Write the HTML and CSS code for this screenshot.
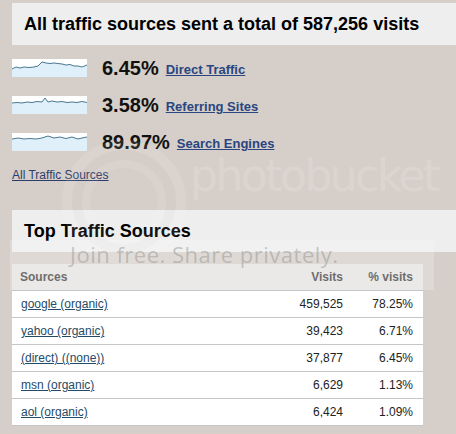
FILE: index.html
```html
<!DOCTYPE html>
<html>

<head>
    <meta name="viewport" content="width=device-width, initial-scale=1.0">
    <title>Traffic Sources</title>
    <link rel="stylesheet" href="styles.css">
</head>

<body>
    <div class="page">
        <header class="box-head">
            <h1>All traffic sources sent a total of 587,256 visits</h1>
        </header>

        <section class="summary">
            <div class="source-row">
                <svg class="spark" width="75" height="18" viewBox="0 0 75 18">
                    <rect width="75" height="18" fill="#ffffff"/>
                    <path d="M0 10 L4 8 L8 9 L12 8 L17 8.5 L22 8 L26 7 L30 3 L34 4 L38 4.5 L42 4 L46 4.5 L50 5 L54 6 L58 5.5 L62 7 L66 7 L70 8 L75 6 L75 18 L0 18 Z" fill="#dff0fa"/>
                    <path d="M0 10 L4 8 L8 9 L12 8 L17 8.5 L22 8 L26 7 L30 3 L34 4 L38 4.5 L42 4 L46 4.5 L50 5 L54 6 L58 5.5 L62 7 L66 7 L70 8 L75 6" fill="none" stroke="#4a7891" stroke-width="1"/>
                </svg>
                <span class="pct">6.45%</span>
                <a href="#" class="src-link">Direct Traffic</a>
            </div>
            <div class="source-row">
                <svg class="spark" width="75" height="18" viewBox="0 0 75 18">
                    <rect width="75" height="18" fill="#ffffff"/>
                    <path d="M0 7 L5 6.5 L10 7 L15 6 L20 6.5 L25 5.5 L30 6 L33 2 L36 6 L40 5 L45 6 L50 5.5 L55 6.5 L60 6 L65 6.5 L70 5.5 L75 6.5 L75 18 L0 18 Z" fill="#dff0fa"/>
                    <path d="M0 7 L5 6.5 L10 7 L15 6 L20 6.5 L25 5.5 L30 6 L33 2 L36 6 L40 5 L45 6 L50 5.5 L55 6.5 L60 6 L65 6.5 L70 5.5 L75 6.5" fill="none" stroke="#4a7891" stroke-width="1"/>
                </svg>
                <span class="pct">3.58%</span>
                <a href="#" class="src-link">Referring Sites</a>
            </div>
            <div class="source-row">
                <svg class="spark" width="75" height="18" viewBox="0 0 75 18">
                    <rect width="75" height="18" fill="#ffffff"/>
                    <path d="M0 6 L6 5 L12 6 L18 5.5 L24 6 L30 5 L36 3 L42 5 L48 4 L54 5.5 L60 4 L66 6 L70 5 L75 4 L75 18 L0 18 Z" fill="#dff0fa"/>
                    <path d="M0 6 L6 5 L12 6 L18 5.5 L24 6 L30 5 L36 3 L42 5 L48 4 L54 5.5 L60 4 L66 6 L70 5 L75 4" fill="none" stroke="#4a7891" stroke-width="1"/>
                </svg>
                <span class="pct">89.97%</span>
                <a href="#" class="src-link">Search Engines</a>
            </div>
            <a href="#" class="all-link">All Traffic Sources</a>
        </section>

        <header class="box-head top-head">
            <h1>Top Traffic Sources</h1>
        </header>

        <table class="sources">
            <thead>
                <tr>
                    <th class="name">Sources</th>
                    <th class="num">Visits</th>
                    <th class="num">% visits</th>
                </tr>
            </thead>
            <tbody>
                <tr><td><a href="#">google (organic)</a></td><td class="num">459,525</td><td class="num">78.25%</td></tr>
                <tr><td><a href="#">yahoo (organic)</a></td><td class="num">39,423</td><td class="num">6.71%</td></tr>
                <tr><td><a href="#">(direct) ((none))</a></td><td class="num">37,877</td><td class="num">6.45%</td></tr>
                <tr><td><a href="#">msn (organic)</a></td><td class="num">6,629</td><td class="num">1.13%</td></tr>
                <tr><td><a href="#">aol (organic)</a></td><td class="num">6,424</td><td class="num">1.09%</td></tr>
            </tbody>
        </table>

        <!-- host watermark laid over the page -->
        <div class="mark-ring"></div>
        <div class="mark-word">photobucket</div>
        <div class="mark-band"></div>
        <div class="mark-line">Join free. Share privately.</div>
    </div>
</body>

</html>
```

FILE: styles.css
```css
body {
    margin: 0;
    background: #d6cfc9;
    font-family: "Liberation Sans", Arial, sans-serif;
}

.page {
    position: relative;
    width: 456px;
    height: 434px;
    overflow: hidden;
    padding-top: 3px;
    box-sizing: border-box;
}

.box-head {
    margin-left: 12px;
    height: 42px;
    background: #eeeeee;
    display: flex;
    align-items: center;
    padding-left: 12px;
}

.box-head h1 {
    margin: 0;
    font-size: 18px;
    font-weight: bold;
    color: #000;
    padding-top: 1px;
}

.summary {
    padding: 14px 0 0 12px;
    height: 152px;
    box-sizing: border-box;
}

.source-row {
    display: flex;
    align-items: center;
    height: 18px;
    margin-bottom: 19px;
}

.spark {
    display: block;
    flex: none;
}

.pct {
    margin-left: 15px;
    font-size: 20px;
    font-weight: bold;
    color: #111;
}

.src-link {
    margin-left: 7px;
    font-size: 13px;
    font-weight: bold;
    color: #2a4580;
    padding-top: 3px;
}

.all-link {
    display: block;
    width: max-content;
    margin-top: -2px;
    font-size: 12px;
    line-height: 14px;
    color: #2c3d6b;
}

.top-head {
    margin-top: 13px;
}

.sources {
    margin: 12px 0 0 12px;
    width: 411px;
    border-collapse: collapse;
    font-size: 12px;
}

.sources th {
    height: 26px;
    background: #e6e3e0;
    color: #444;
    font-weight: bold;
    font-size: 12px;
    text-align: left;
    padding: 0 0 0 8px;
    border-bottom: 1px solid #c6c6c6;
}

.sources td {
    height: 26px;
    background: #fff;
    color: #222;
    padding: 0 0 0 9px;
    border-bottom: 1px solid #c6c6c6;
}

.sources td a {
    color: #1f4a68;
}

.sources .num {
    text-align: right;
    padding: 0 10px 0 0;
}

.sources th.num:nth-child(2),
.sources td.num:nth-child(2) {
    width: 80px;
}

.sources th.num:nth-child(3),
.sources td.num:nth-child(3) {
    width: 60px;
}

.mark-ring {
    position: absolute;
    left: 62px;
    top: 140px;
    width: 104px;
    height: 104px;
    border-radius: 50%;
    border: 10px solid rgba(255, 255, 255, 0.1);
    box-shadow: inset 0 0 0 10px rgba(0, 0, 0, 0.02), inset 0 0 0 18px rgba(255, 255, 255, 0.08);
    pointer-events: none;
}

.mark-word {
    position: absolute;
    left: 190px;
    top: 157px;
    font-family: "DejaVu Sans", sans-serif;
    font-size: 44px;
    line-height: 38px;
    letter-spacing: -2.5px;
    color: rgba(255, 255, 255, 0.14);
    pointer-events: none;
}

.mark-band {
    position: absolute;
    left: 10px;
    top: 240px;
    width: 424px;
    height: 50px;
    background: rgba(255, 255, 255, 0.22);
    pointer-events: none;
}

.mark-line {
    position: absolute;
    left: 70px;
    top: 245px;
    font-family: "Open Sans", sans-serif;
    font-size: 22px;
    line-height: 18px;
    letter-spacing: 0.5px;
    color: rgba(140, 140, 140, 0.45);
    pointer-events: none;
}
```
